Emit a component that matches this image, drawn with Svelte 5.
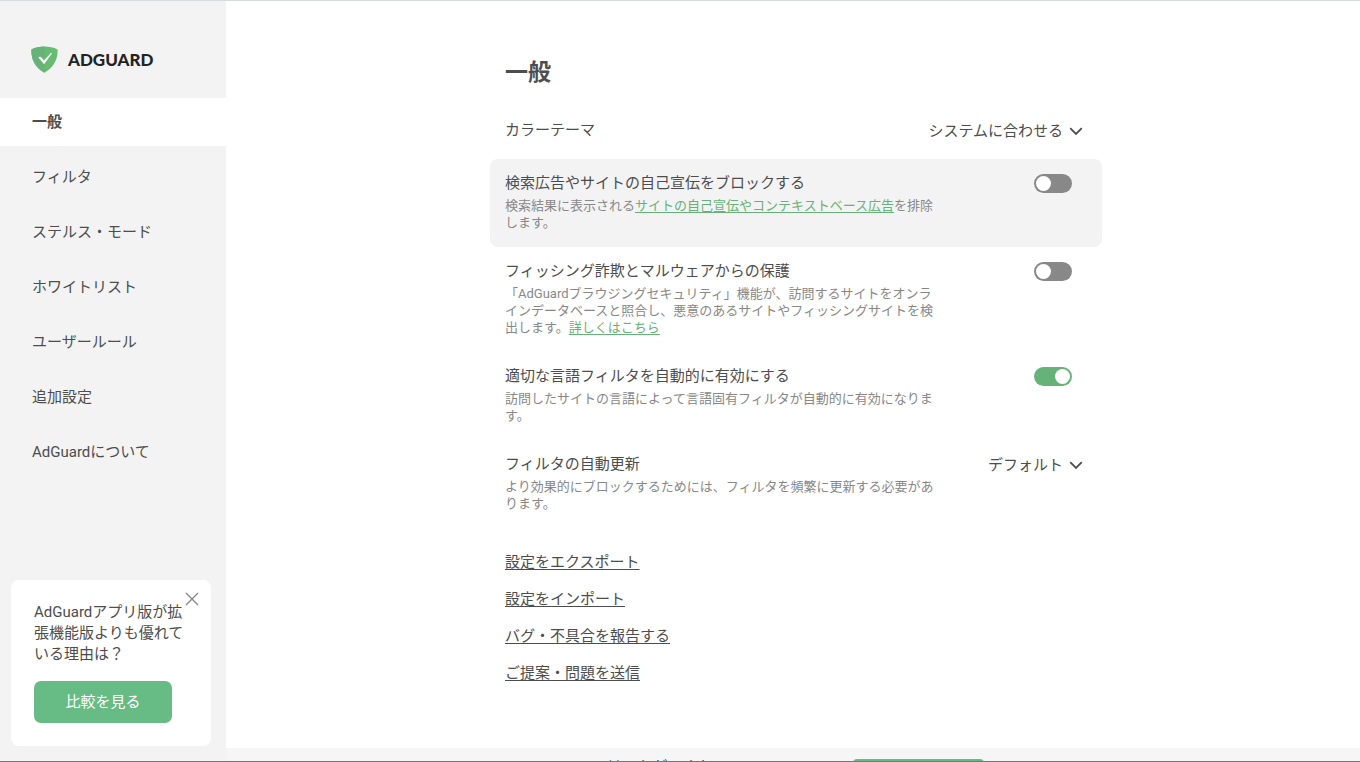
<script>
  const nav = ['一般', 'フィルタ', 'ステルス・モード', 'ホワイトリスト', 'ユーザールール', '追加設定', 'AdGuardについて'];
  const actions = ['設定をエクスポート', '設定をインポート', 'バグ・不具合を報告する', 'ご提案・問題を送信'];
  let active = $state(0);
  let blockSearchAds = $state(false);
  let safeBrowsing = $state(false);
  let autodetect = $state(true);
  let promoOpen = $state(true);
</script>

{#snippet chevron()}
  <svg class="chevron" viewBox="0 0 14 14" aria-hidden="true">
    <path d="M1.200 4.200 7 9.900l5.800-5.700" />
  </svg>
{/snippet}

<div class="page">
  <aside class="sidebar">
    <a class="logo" href="#home">
      <svg viewBox="0 0 27 27" aria-hidden="true">
        <path fill="#68bc71" d="M13.500.5C9.300.5 4.200 1.300.4 3.500c0 4.500-.1 15.700 13.100 23.200C26.700 19.200 26.600 8 26.600 3.500 22.800 1.300 17.700.5 13.500.5Z" />
        <path fill="#67b279" d="M13.500 26.700C.3 19.200.4 8 .4 3.500 4.200 1.300 9.300.5 13.500.5v26.200Z" />
        <path fill="#fff" d="M13.100 18.300 21 7.300c-.7-.4-1.200-.1-1.500.2L13 14.400l-2.400-2.900c-1.200-1.300-2.800-.4-3.200-.1l5.700 6.900" />
      </svg>
      <span>ADGUARD</span>
    </a>
    <nav>
      {#each nav as item, i}
        <a href={'#section-' + i} class:active={active === i} onclick={() => (active = i)}>{item}</a>
      {/each}
    </nav>
    {#if promoOpen}
      <section class="promo">
        <button class="close" aria-label="閉じる" onclick={() => (promoOpen = false)}>
          <svg viewBox="0 0 14 14" aria-hidden="true"><path d="M1 1l12 12M13 1 1 13" /></svg>
        </button>
        <p>AdGuardアプリ版が拡張機能版よりも優れている理由は？</p>
        <button class="compare">比較を見る</button>
      </section>
    {/if}
  </aside>

  <main>
    <div class="content">
      <h1>一般</h1>

      <div class="row">
        <div class="info"><label class="title" for="theme">カラーテーマ</label></div>
        <div class="select">
          <select id="theme"><option>システムに合わせる</option></select>
          {@render chevron()}
        </div>
      </div>

      <div class="row highlighted">
        <div class="info">
          <label class="title" for="search-ads">検索広告やサイトの自己宣伝をブロックする</label>
          <p class="desc">検索結果に表示される<a href="#ads">サイトの自己宣伝やコンテキストベース広告</a>を排除します。</p>
        </div>
        <input class="toggle" id="search-ads" type="checkbox" bind:checked={blockSearchAds} />
      </div>

      <div class="row">
        <div class="info">
          <label class="title" for="safe">フィッシング詐欺とマルウェアからの保護</label>
          <p class="desc">「AdGuardブラウジングセキュリティ」機能が、訪問するサイトをオンラインデータベースと照合し、悪意のあるサイトやフィッシングサイトを検出します。<a href="#more">詳しくはこちら</a></p>
        </div>
        <input class="toggle" id="safe" type="checkbox" bind:checked={safeBrowsing} />
      </div>

      <div class="row">
        <div class="info">
          <label class="title" for="detect">適切な言語フィルタを自動的に有効にする</label>
          <p class="desc">訪問したサイトの言語によって言語固有フィルタが自動的に有効になります。</p>
        </div>
        <input class="toggle" id="detect" type="checkbox" bind:checked={autodetect} />
      </div>

      <div class="row">
        <div class="info">
          <label class="title" for="update">フィルタの自動更新</label>
          <p class="desc">より効果的にブロックするためには、フィルタを頻繁に更新する必要があります。</p>
        </div>
        <div class="select">
          <select id="update"><option>デフォルト</option></select>
          {@render chevron()}
        </div>
      </div>

      <div class="actions">
        {#each actions as action}
          <button>{action}</button>
        {/each}
      </div>
    </div>

    <footer>
      <div class="rate">
        <p>AdGuardはいかがですか</p>
        <button aria-label="評価する"></button>
      </div>
    </footer>
  </main>
</div>

<style>
  :global(body) {
    margin: 0;
    background: #fff;
  }

  .page {
    display: flex;
    box-sizing: border-box;
    height: 100vh;
    overflow: hidden;
    border-top: 1px solid #d8dbdf;
    border-bottom: 1px solid #767676;
    color: #4d4d4d;
    font: 15px/22px Roboto, 'Noto Sans CJK JP', sans-serif;
  }

  .page * {
    box-sizing: border-box;
  }

  button,
  select {
    padding: 0;
    border: 0;
    background: none;
    color: inherit;
    font: inherit;
    cursor: pointer;
  }

  p,
  h1 {
    margin: 0;
  }

  .sidebar {
    display: flex;
    flex: 0 0 226px;
    flex-direction: column;
    background: #f3f3f3;
  }

  .logo {
    display: flex;
    align-items: center;
    gap: 10px;
    padding: 45px 31px 25px;
    color: #242424;
    font: 900 17px/27px Lato, sans-serif;
    text-decoration: none;
  }

  .logo svg {
    width: 27px;
    height: 27px;
  }

  nav {
    display: flex;
    flex: 1;
    flex-direction: column;
    gap: 7px;
  }

  nav a {
    padding: 13px 32px;
    color: inherit;
    text-decoration: none;
  }

  nav .active {
    background: #fff;
    font-weight: 700;
  }

  .promo {
    position: relative;
    margin: 0 15px 15px 11px;
    padding: 22px 23px 23px;
    border-radius: 8px;
    background: #fff;
    line-height: 21px;
  }

  .close {
    position: absolute;
    top: 12px;
    right: 12px;
    width: 14px;
    height: 14px;
  }

  .close svg {
    display: block;
    fill: none;
    stroke: #888;
    stroke-width: 1.4;
  }

  .compare {
    width: 138px;
    height: 42px;
    margin-top: 16px;
    border-radius: 7px;
    background: #67bb85;
    color: #fff;
  }

  main {
    flex: 1;
    min-width: 0;
    overflow: hidden;
  }

  .content,
  .rate {
    max-width: 618px;
    margin: 0 auto;
    padding-left: 6px;
  }

  .content {
    padding-top: 56px;
    padding-bottom: 64px;
  }

  h1 {
    margin-bottom: 17px;
    padding-left: 15px;
    font-size: 23px;
    line-height: 32px;
  }

  .row {
    display: flex;
    align-items: flex-start;
    justify-content: space-between;
    padding: 13px 19px 16px 15px;
    border-radius: 8px;
  }

  .highlighted {
    background: #f3f3f3;
  }

  .info {
    max-width: 436px;
  }

  .title {
    display: block;
  }

  .desc {
    margin-top: 3px;
    color: #888;
    font-size: 13px;
    line-height: 17px;
  }

  .desc a {
    color: #67b279;
    text-underline-offset: 2px;
  }

  .select {
    position: relative;
  }

  select {
    display: block;
    height: 24px;
    padding-right: 20px;
    appearance: none;
    text-align-last: right;
  }

  .chevron {
    position: absolute;
    top: 5px;
    right: 0;
    width: 14px;
    height: 14px;
    fill: none;
    stroke: #4d4d4d;
    stroke-width: 1.8;
    pointer-events: none;
  }

  .toggle {
    display: flex;
    width: 38px;
    height: 19px;
    margin: 2px 11px 0 0;
    padding: 2px;
    border-radius: 10px;
    background: #888;
    appearance: none;
    cursor: pointer;
  }

  .toggle::before {
    width: 15px;
    height: 15px;
    border-radius: 50%;
    background: #fff;
    content: '';
  }

  .toggle:checked {
    justify-content: flex-end;
    background: #67b279;
  }

  .actions {
    display: flex;
    flex-direction: column;
    align-items: flex-start;
    gap: 15px;
    padding: 23px 15px 0;
  }

  .actions button {
    text-decoration: underline;
    text-underline-offset: 2px;
  }

  footer {
    background: #f6f6f6;
  }

  .rate {
    display: flex;
    align-items: flex-start;
    justify-content: space-between;
    padding: 11px 118px 11px 65px;
    line-height: 16px;
  }

  .rate button {
    width: 131px;
    height: 40px;
    border-radius: 4px;
    background: #67bb85;
  }
</style>
